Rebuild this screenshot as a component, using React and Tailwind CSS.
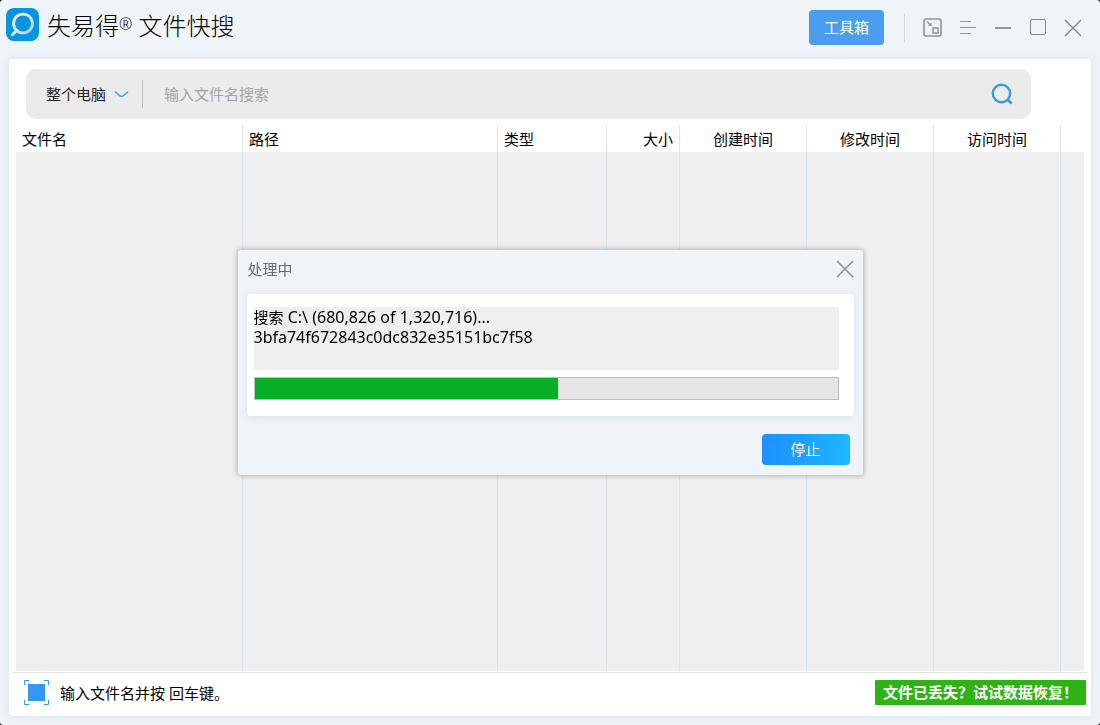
import React from "react";

const columns = [
  { label: "文件名", width: "w-[227px]", align: "text-left" },
  { label: "路径", width: "w-[255px]", align: "text-left" },
  { label: "类型", width: "w-[109px]", align: "text-left" },
  { label: "大小", width: "w-[73px]", align: "text-right" },
  { label: "创建时间", width: "w-[127px]", align: "text-center" },
  { label: "修改时间", width: "w-[127px]", align: "text-center" },
  { label: "访问时间", width: "w-[127px]", align: "text-center" },
];

function Logo() {
  return (
    <svg width="33" height="33" viewBox="0 0 33 33" fill="none" aria-hidden="true">
      <defs>
        <linearGradient id="ring" x1="0" y1="0" x2="1" y2="1">
          <stop offset="0" stopColor="#ffffff" />
          <stop offset="1" stopColor="#a5d3f8" />
        </linearGradient>
      </defs>
      <rect width="33" height="33" rx="8" fill="#0895df" />
      <circle cx="17" cy="15.5" r="9.4" stroke="url(#ring)" strokeWidth="2.8" />
      <path d="M10.8 22.3L6.4 26.8" stroke="#e4f2fd" strokeWidth="2.8" strokeLinecap="round" />
    </svg>
  );
}

function CloseIcon() {
  return (
    <svg width="18" height="18" viewBox="0 0 18 18" fill="none" stroke="#858585" strokeWidth="1.3" aria-hidden="true">
      <path d="M1 1L17 17M17 1L1 17" />
    </svg>
  );
}

function Header() {
  return (
    <header className="flex h-[59px] shrink-0 items-start justify-between pl-1.5 pr-[18px]">
      <div className="flex items-start gap-2 pt-2">
        <Logo />
        <h1 className="text-2xl leading-9 font-light text-black">
          失易得<span className="align-[5px] text-base leading-4 font-light">®</span> 文件快搜
        </h1>
      </div>
      <div className="flex items-center pt-2.5">
        <button className="h-[35px] w-[75px] rounded bg-[#4a9eed] text-[15px] text-white">工具箱</button>
        <div className="ml-5 h-7 w-px bg-[#d8dcdf]" />
        <button aria-label="精简模式" className="ml-[18px]">
          <svg width="19" height="19" viewBox="0 0 19 19" fill="none" stroke="#929292" aria-hidden="true">
            <rect x="1" y="1" width="17" height="17" rx="2" strokeWidth="1.6" />
            <rect x="10" y="10" width="5" height="5" strokeWidth="1.5" />
            <path d="M4 3.5L7.5 7" strokeWidth="1.2" />
            <path d="M8.5 4.5V8H5Z" fill="#929292" stroke="none" />
          </svg>
        </button>
        <button aria-label="菜单" className="ml-[18px]">
          <svg width="17" height="15" viewBox="0 0 17 15" stroke="#959595" aria-hidden="true">
            <path d="M0 1.5H11M0 7.5H16M0 13.5H11" />
          </svg>
        </button>
        <button aria-label="最小化" className="ml-[18px]">
          <svg width="17" height="16" viewBox="0 0 17 16" stroke="#999" strokeWidth="2" aria-hidden="true">
            <path d="M0 8H16" />
          </svg>
        </button>
        <button aria-label="最大化" className="ml-[18px]">
          <svg width="17" height="17" viewBox="0 0 17 17" fill="none" stroke="#858585" aria-hidden="true">
            <rect x="0.5" y="0.5" width="15" height="15" rx="1.5" />
          </svg>
        </button>
        <button aria-label="关闭" className="ml-[17px]">
          <CloseIcon />
        </button>
      </div>
    </header>
  );
}

function SearchBar() {
  return (
    <form
      role="search"
      onSubmit={(e) => e.preventDefault()}
      className="mr-[53px] ml-2.5 flex h-[50px] shrink-0 items-center rounded-[10px] bg-[#ebebeb] pl-5 pr-[18px]"
    >
      <div className="relative flex w-[83px] items-center">
        <select aria-label="搜索范围" className="w-full appearance-none bg-transparent text-[15px] text-[#222]">
          <option>整个电脑</option>
        </select>
        <svg className="pointer-events-none absolute right-0" width="15" height="8" viewBox="0 0 15 8" fill="none" stroke="#4ba3d6" strokeWidth="1.5" aria-hidden="true">
          <path d="M1 1.5L5.5 5.6Q7.5 7 9.5 5.6L14 1.5" />
        </svg>
      </div>
      <div className="ml-[13px] h-7 w-px bg-[#bfbfbf]" />
      <input
        aria-label="文件名"
        placeholder="输入文件名搜索"
        className="ml-[21px] min-w-0 flex-1 bg-transparent text-[15px] outline-none placeholder:text-[#a3a3a3]"
      />
      <button aria-label="搜索">
        <svg width="22" height="22" viewBox="0 0 22 22" fill="none" stroke="#3d9cd3" strokeWidth="2.4" aria-hidden="true">
          <circle cx="10.5" cy="10.5" r="8.7" />
          <path d="M16.5 16.5L20.7 20.7" strokeWidth="2.6" />
        </svg>
      </button>
    </form>
  );
}

function FileTable() {
  return (
    <div className="mt-1.5 flex min-h-0 flex-1">
      <table className="h-full w-full table-fixed border-separate border-spacing-0 text-[15px] text-black">
        <thead>
          <tr className="h-[27px]">
            {columns.map((c) => (
              <th
                key={c.label}
                className={`${c.width} ${c.align} h-[27px] border-r border-[#dfe4ea] px-1.5 pt-0.5 pb-0 leading-[25px] font-normal`}
              >
                {c.label}
              </th>
            ))}
            <td />
          </tr>
        </thead>
        <tbody>
          <tr className="bg-[#efefef]">
            {columns.map((c) => (
              <td key={c.label} className="border-r border-[#d9e4f1]" />
            ))}
            <td />
          </tr>
        </tbody>
      </table>
    </div>
  );
}

function Footer() {
  return (
    <footer className="-mx-[3px] mt-px flex h-11 shrink-0 items-center justify-between border-t border-[#e3e3e3] pr-px pl-[11px] pb-1">
      <div className="flex items-center gap-[11px]">
        <svg width="25" height="25" viewBox="0 0 25 25" fill="none" stroke="#3296fa" aria-hidden="true">
          <rect x="4" y="4" width="17" height="17" fill="#3296fa" stroke="none" />
          <path d="M0.5 5V0.5H5M20 0.5H24.5V5M24.5 20V24.5H20M5 24.5H0.5V20" />
        </svg>
        <p className="text-[15px] leading-5 text-black">输入文件名并按 回车键。</p>
      </div>
      <a href="#recovery" className="block h-[25px] rounded-[1px] bg-[#2fb314] px-2 text-[15px] leading-[25px] font-bold text-white">
        文件已丢失？试试数据恢复！
      </a>
    </footer>
  );
}

function ProgressDialog() {
  return (
    <div className="fixed inset-0 flex items-center justify-center">
      <section
        role="dialog"
        aria-labelledby="dialog-title"
        className="w-[625px] rounded-[3px] bg-[#eff4f8] px-[9px] pb-2.5 shadow-[0_0_5px_1px_rgba(0,0,0,0.25)]"
      >
        <div className="flex h-11 items-center justify-between pb-1.5 pl-px">
          <h2 id="dialog-title" className="text-[15px] text-[#666d73]">处理中</h2>
          <button aria-label="关闭对话框">
            <CloseIcon />
          </button>
        </div>
        <div className="rounded-[4px] bg-white pt-[13px] pr-[15px] pb-4 pl-[7px] shadow-[0_1px_7px_rgba(190,208,228,0.5)]">
          <div className="h-[63px] bg-[#efefef] text-base leading-5 text-black">
            <p><span className="text-[15px]">搜索</span> C:\ (680,826 of 1,320,716)...</p>
            <p>3bfa74f672843c0dc832e35151bc7f58</p>
          </div>
          <progress
            aria-label="搜索进度"
            max="100"
            value="52"
            className="mt-[7px] block h-[23px] w-full appearance-none border border-[#bcbcbc] bg-[#e6e6e6] [&::-webkit-progress-bar]:bg-[#e6e6e6] [&::-webkit-progress-value]:bg-[#06b025]"
          />
        </div>
        <div className="flex justify-end pt-[18px] pr-1">
          <button className="h-[31px] w-[88px] rounded bg-linear-to-r from-[#1e90ff] to-[#1fb6ff] text-[15px] text-white">
            停止
          </button>
        </div>
      </section>
    </div>
  );
}

export default function App() {
  return (
    <div className="h-screen bg-black font-['Noto_Sans','Noto_Sans_CJK_SC',sans-serif]" lang="zh-CN">
      <div className="flex h-full flex-col rounded-[3px] bg-[#eff4f8] pb-[9px]">
        <Header />
        <main className="mx-[9px] flex min-h-0 flex-1 flex-col rounded-[4px] bg-white px-[7px] pt-2.5 shadow-[0_0_9px_rgba(190,208,228,0.5)]">
          <SearchBar />
          <FileTable />
          <Footer />
        </main>
      </div>
      <ProgressDialog />
    </div>
  );
}
